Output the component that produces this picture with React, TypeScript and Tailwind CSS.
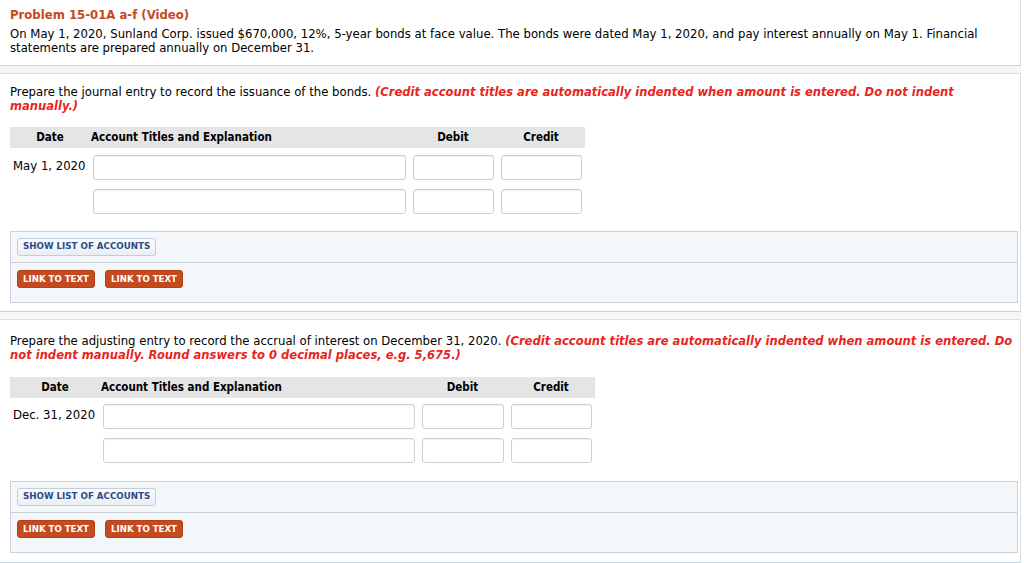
const font = { fontFamily: '"DejaVu Sans", Verdana, sans-serif' };
const headFont = { fontFamily: '"DejaVu Sans Condensed", "DejaVu Sans", Verdana, sans-serif', fontStretch: "condensed" };

type Entry = { date: string; widths: [number, number, number, number]; firstGap: number };

function Separator() {
    return <div className="h-[9px] w-[1021px] bg-[#f4f7fa] border-t border-b border-t-[#c9d3dd] border-b-[#d9e0e6]"></div>
}

function JournalTable({ entry }: { entry: Entry }) {
    const [d, a, b, c] = entry.widths;
    const box = "h-[25px] border border-[#cfcfcf] rounded-[3px] bg-white shadow-[inset_0_1px_1px_rgba(0,0,0,0.06)]";
    return <div className="text-[11.7px] text-black">
        <div className="flex h-[21px] items-center bg-[#e5e5e5] font-bold text-[11.5px]" style={{ width: d + a + b + c, ...headFont }}>
            <div className="text-center" style={{ width: d }}>Date</div>
            <div className="pl-[1px]" style={{ width: a }}>Account Titles and Explanation</div>
            <div className="text-center" style={{ width: b }}>Debit</div>
            <div className="text-center" style={{ width: c }}>Credit</div>
        </div>
        {[0, 1].map(i => (
            <div key={i} className="flex" style={{ marginTop: i === 0 ? entry.firstGap : 9 }}>
                <div className="pl-[3px] leading-[22px] whitespace-nowrap" style={{ width: d }}>{i === 0 ? entry.date : ""}</div>
                <div style={{ width: a }}><div className={`ml-[3px] mr-[3px] ${box}`}></div></div>
                <div style={{ width: b }}><div className={`ml-[4px] mr-[3px] ${box}`}></div></div>
                <div style={{ width: c }}><div className={`ml-[4px] mr-[3px] ${box}`}></div></div>
            </div>
        ))}
    </div>
}

function ToolBox() {
    return <div className="ml-[10px] w-[1008px] border border-[#c9d1db] bg-[#f4f7fa]">
        <div className="h-[31px] flex items-center pl-[6px] border-b border-[#c9d1db]">
            <button className="h-[18px] px-[5px] rounded-[3px] border border-[#c5cdd8] bg-gradient-to-b from-[#fbfcfd] to-[#e9eef4] text-[#2b4c86] text-[8.7px] font-bold">SHOW LIST OF ACCOUNTS</button>
        </div>
        <div className="h-[39px] flex items-start pt-[7px] pl-[6px] gap-[10px]">
            <button className="h-[18px] w-[78px] rounded-[3px] bg-[#c44a20] border border-[#b5411a] text-white text-[8.6px] font-bold">LINK TO TEXT</button>
            <button className="h-[18px] w-[78px] rounded-[3px] bg-[#c44a20] border border-[#b5411a] text-white text-[8.6px] font-bold">LINK TO TEXT</button>
        </div>
    </div>
}

export default function App() {
    return <div className="w-[1024px] h-[563px] overflow-hidden bg-white text-black" style={font}>
        <div className="w-[1021px] border-r border-[#dedede] pl-[10px] pt-[8px] pb-[10px] text-[11.7px] leading-[14px] whitespace-nowrap">
            <div className="font-bold text-[#c5481e]">Problem 15-01A a-f (Video)</div>
            <div className="mt-[5px]">On May 1, 2020, Sunland Corp. issued $670,000, 12%, 5-year bonds at face value. The bonds were dated May 1, 2020, and pay interest annually on May 1. Financial<br />statements are prepared annually on December 31.</div>
        </div>
        <Separator />
        <div className="w-[1021px] border-r border-[#dedede] pt-[11px] pb-[8px]">
            <div className="pl-[10px] text-[11.7px] leading-[14px] whitespace-nowrap">
                Prepare the journal entry to record the issuance of the bonds. <span className="font-bold italic text-[11.55px] text-[#e8251d]">(Credit account titles are automatically indented when amount is entered. Do not indent<br />manually.)</span>
            </div>
            <div className="pl-[10px] mt-[14px]">
                <JournalTable entry={{ date: "May 1, 2020", widths: [80, 319, 88, 88], firstGap: 7 }} />
            </div>
            <div className="mt-[17px]"><ToolBox /></div>
        </div>
        <Separator />
        <div className="w-[1021px] border-r border-[#dedede] pt-[14px] pb-[9px] border-b border-b-[#c9d3dd]">
            <div className="pl-[10px] text-[11.7px] leading-[14px] whitespace-nowrap">
                Prepare the adjusting entry to record the accrual of interest on December 31, 2020. <span className="font-bold italic text-[11.55px] text-[#e8251d]">(Credit account titles are automatically indented when amount is entered. Do<br />not indent manually. Round answers to 0 decimal places, e.g. 5,675.)</span>
            </div>
            <div className="pl-[10px] mt-[15px]">
                <JournalTable entry={{ date: "Dec. 31, 2020", widths: [90, 318, 89, 88], firstGap: 6 }} />
            </div>
            <div className="mt-[18px]"><ToolBox /></div>
        </div>
    </div>
}
